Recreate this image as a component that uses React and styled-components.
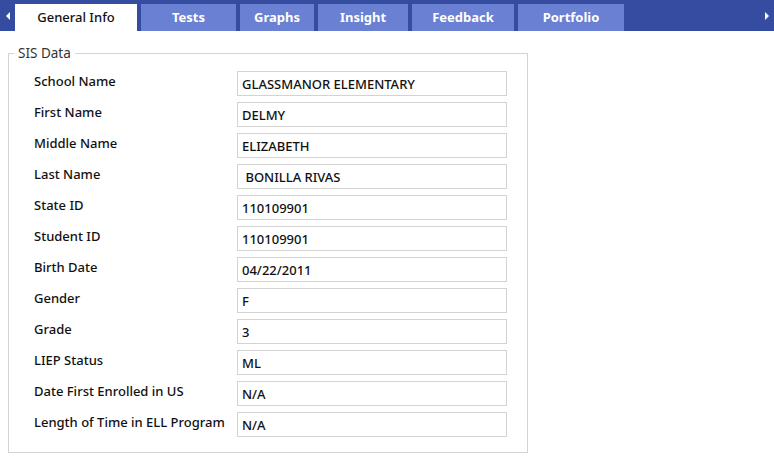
import React from 'react';
import styled, { createGlobalStyle } from 'styled-components';

const Global = createGlobalStyle`
  body {
    margin: 0;
    background: #fff;
    font-family: "Noto Sans", "DejaVu Sans", sans-serif;
  }
`;

const TabBar = styled.div`
  display: flex;
  align-items: flex-end;
  height: 31px;
  background: #364ca1;
  position: relative;
`;

const Arrow = styled.div`
  width: 15px;
  align-self: stretch;
  display: flex;
  align-items: center;
  justify-content: center;
  svg {
    display: block;
  }
`;

const Tabs = styled.div`
  display: flex;
  gap: 4px;
  flex: 1;
  height: 27px;
`;

const Tab = styled.div`
  width: ${p => p.w}px;
  display: flex;
  align-items: center;
  justify-content: center;
  font-size: 13px;
  font-weight: ${p => (p.active ? 500 : 700)};
  color: ${p => (p.active ? '#111' : '#fff')};
  background: ${p => (p.active ? '#fff' : '#6a80d2')};
  padding-bottom: 1px;
`;

const Content = styled.div`
  padding: 13px 246px 10px 8px;
`;

const Fieldset = styled.fieldset`
  margin: 0;
  border: 1px solid #d3d3d3;
  padding: 9px 20px 15px 25px;
`;

const Legend = styled.legend`
  font-size: 13.5px;
  color: #333;
  padding: 0 4px;
  margin-left: -20px;
`;

const Rows = styled.div`
  display: grid;
  grid-template-columns: 203px 270px;
  row-gap: 6px;
`;

const Label = styled.div`
  font-size: 13px;
  font-weight: 500;
  color: #111;
  line-height: 18px;
  margin-top: 1px;
`;

const Value = styled.div`
  height: 25px;
  box-sizing: border-box;
  border: 1px solid #d3d3d3;
  padding: 0 5px 0 4px;
  display: flex;
  align-items: center;
  font-size: 13px;
  font-weight: 500;
  color: #111;
  white-space: pre;
`;

const tabs = [
  { name: 'General Info', w: 122, active: true },
  { name: 'Tests', w: 95 },
  { name: 'Graphs', w: 74 },
  { name: 'Insight', w: 90 },
  { name: 'Feedback', w: 102 },
  { name: 'Portfolio', w: 106 },
];

const fields = [
  ['School Name', 'GLASSMANOR ELEMENTARY'],
  ['First Name', 'DELMY'],
  ['Middle Name', 'ELIZABETH'],
  ['Last Name', ' BONILLA RIVAS'],
  ['State ID', '110109901'],
  ['Student ID', '110109901'],
  ['Birth Date', '04/22/2011'],
  ['Gender', 'F'],
  ['Grade', '3'],
  ['LIEP Status', 'ML'],
  ['Date First Enrolled in US', 'N/A'],
  ['Length of Time in ELL Program', 'N/A'],
];

const App = () => (
  <>
    <Global />
    <TabBar>
      <Arrow>
        <svg width="4" height="8" viewBox="0 0 4 8">
          <path d="M4 0 L0 4 L4 8 Z" fill="#fff" />
        </svg>
      </Arrow>
      <Tabs>
        {tabs.map(t => (
          <Tab key={t.name} w={t.w} active={t.active}>
            {t.name}
          </Tab>
        ))}
      </Tabs>
      <Arrow>
        <svg width="4" height="8" viewBox="0 0 4 8">
          <path d="M0 0 L4 4 L0 8 Z" fill="#fff" />
        </svg>
      </Arrow>
    </TabBar>
    <Content>
      <Fieldset>
        <Legend>SIS Data</Legend>
        <Rows>
          {fields.map(([label, value]) => (
            <React.Fragment key={label}>
              <Label>{label}</Label>
              <Value>{value}</Value>
            </React.Fragment>
          ))}
        </Rows>
      </Fieldset>
    </Content>
  </>
);

export default App;
